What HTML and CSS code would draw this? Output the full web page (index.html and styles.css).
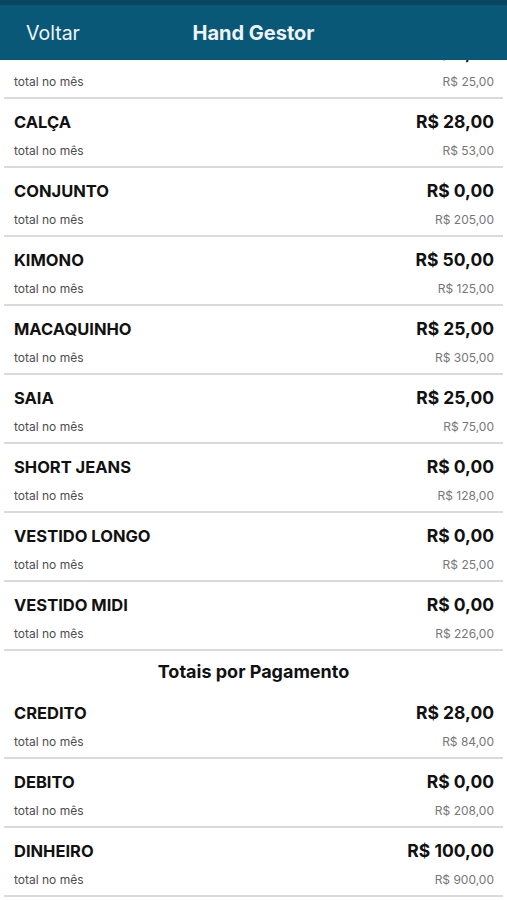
FILE: index.html
```html
<!DOCTYPE html>
<html lang="pt-BR">

<head>
  <meta charset="UTF-8">
  <meta name="viewport" content="width=device-width, initial-scale=1.0">
  <title>Hand Gestor</title>
  <link rel="stylesheet" href="styles.css">
</head>

<body>
  <header class="topbar">
    <div class="status"></div>
    <div class="nav">
      <span class="back">Voltar</span>
      <span class="nav-title">Hand Gestor</span>
      <span></span>
    </div>
  </header>

  <main class="scroller">
    <div class="list">
      <div class="row">
        <div class="line"><span class="name">BLUSA</span><span class="value">R$ 0,00</span></div>
        <div class="line"><span class="label">total no mês</span><span class="month">R$ 25,00</span></div>
      </div>
      <div class="row">
        <div class="line"><span class="name">CALÇA</span><span class="value">R$ 28,00</span></div>
        <div class="line"><span class="label">total no mês</span><span class="month">R$ 53,00</span></div>
      </div>
      <div class="row">
        <div class="line"><span class="name">CONJUNTO</span><span class="value">R$ 0,00</span></div>
        <div class="line"><span class="label">total no mês</span><span class="month">R$ 205,00</span></div>
      </div>
      <div class="row">
        <div class="line"><span class="name">KIMONO</span><span class="value">R$ 50,00</span></div>
        <div class="line"><span class="label">total no mês</span><span class="month">R$ 125,00</span></div>
      </div>
      <div class="row">
        <div class="line"><span class="name">MACAQUINHO</span><span class="value">R$ 25,00</span></div>
        <div class="line"><span class="label">total no mês</span><span class="month">R$ 305,00</span></div>
      </div>
      <div class="row">
        <div class="line"><span class="name">SAIA</span><span class="value">R$ 25,00</span></div>
        <div class="line"><span class="label">total no mês</span><span class="month">R$ 75,00</span></div>
      </div>
      <div class="row">
        <div class="line"><span class="name">SHORT JEANS</span><span class="value">R$ 0,00</span></div>
        <div class="line"><span class="label">total no mês</span><span class="month">R$ 128,00</span></div>
      </div>
      <div class="row">
        <div class="line"><span class="name">VESTIDO LONGO</span><span class="value">R$ 0,00</span></div>
        <div class="line"><span class="label">total no mês</span><span class="month">R$ 25,00</span></div>
      </div>
      <div class="row">
        <div class="line"><span class="name">VESTIDO MIDI</span><span class="value">R$ 0,00</span></div>
        <div class="line"><span class="label">total no mês</span><span class="month">R$ 226,00</span></div>
      </div>

      <h2 class="section-title">Totais por Pagamento</h2>

      <div class="row">
        <div class="line"><span class="name">CREDITO</span><span class="value">R$ 28,00</span></div>
        <div class="line"><span class="label">total no mês</span><span class="month">R$ 84,00</span></div>
      </div>
      <div class="row">
        <div class="line"><span class="name">DEBITO</span><span class="value">R$ 0,00</span></div>
        <div class="line"><span class="label">total no mês</span><span class="month">R$ 208,00</span></div>
      </div>
      <div class="row">
        <div class="line"><span class="name">DINHEIRO</span><span class="value">R$ 100,00</span></div>
        <div class="line"><span class="label">total no mês</span><span class="month">R$ 900,00</span></div>
      </div>
    </div>
  </main>
</body>

</html>
```

FILE: styles.css
```css
body {
  font-family: Inter, "Noto Sans", Arial, sans-serif;
  margin: 0;
  padding: 0;
  background-color: #fff;
  color: #111;
}

.topbar {
  height: 60px;
  display: flex;
  flex-direction: column;
}

.status {
  height: 5px;
  background-color: #0b4660;
}

.nav {
  flex: 1;
  display: grid;
  grid-template-columns: 1fr auto 1fr;
  align-items: center;
  background-color: #0a5878;
  color: #eef4f7;
}

.back {
  padding-left: 26px;
  font-size: 19.5px;
}

.nav-title {
  font-size: 20px;
  font-weight: 700;
}

.scroller {
  height: 840px;
  overflow: hidden;
}

.list {
  margin-top: -30px;
}

.row {
  margin: 0 4px;
  padding: 10px 9px 0 10px;
  height: 57px;
  border-bottom: 2px solid #dadada;
}

.line {
  display: flex;
  justify-content: space-between;
  align-items: baseline;
}

.line + .line {
  margin-top: 7px;
}

.name {
  font-size: 16.5px;
  font-weight: 700;
  line-height: 26px;
}

.value {
  font-size: 17.5px;
  font-weight: 700;
  line-height: 26px;
}

.label {
  font-size: 12px;
  line-height: 18px;
  color: #4d4d4d;
}

.month {
  font-size: 12px;
  line-height: 18px;
  color: #777;
}

.section-title {
  margin: 0;
  height: 36px;
  padding-top: 3px;
  line-height: 36px;
  font-size: 18px;
  font-weight: 700;
  text-align: center;
}
```
